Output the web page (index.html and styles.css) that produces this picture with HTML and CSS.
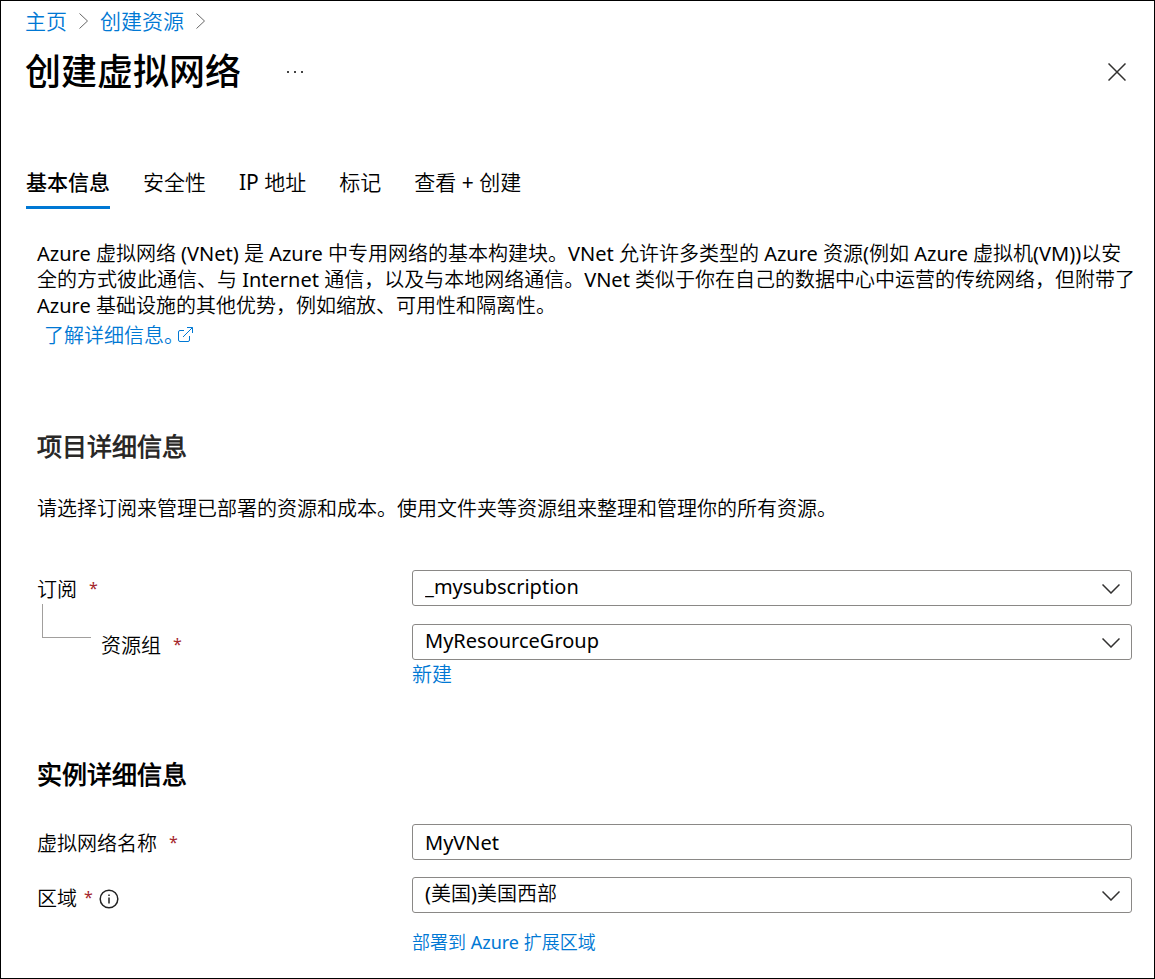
FILE: index.html
```html
<!DOCTYPE html>
<html lang="zh-CN">
<head>
<meta charset="utf-8">
<meta name="viewport" content="width=device-width, initial-scale=1">
<title>创建虚拟网络</title>
<link rel="stylesheet" href="styles.css">
</head>
<body>
<div class="page">
  <nav class="breadcrumb" aria-label="导航路径">
    <a class="link" href="#">主页</a>
    <svg class="crumb-arrow" viewBox="0 0 9 16" aria-hidden="true"><path d="M.5.5L8.500 8l-8 7.500"/></svg>
    <a class="link" href="#">创建资源</a>
    <svg class="crumb-arrow" viewBox="0 0 9 16" aria-hidden="true"><path d="M.5.5L8.500 8l-8 7.500"/></svg>
  </nav>

  <header class="header">
    <h1 class="title">创建虚拟网络</h1>
    <button class="icon-button more" type="button" aria-label="更多">
      <svg class="more-icon" viewBox="0 0 17 4" aria-hidden="true"><path d="M0 1h2v2h-2zM7 1h2v2h-2zM14 1h2v2h-2z"/></svg>
    </button>
    <button class="icon-button close" type="button" aria-label="关闭">
      <svg class="close-icon" viewBox="0 0 18 18" aria-hidden="true"><path d="M.5.5l17 17M17.500.5l-17 17"/></svg>
    </button>
  </header>

  <div class="tabs" role="tablist">
    <button class="tab tab-active" type="button" role="tab" aria-selected="true">基本信息</button>
    <button class="tab" type="button" role="tab" aria-selected="false">安全性</button>
    <button class="tab" type="button" role="tab" aria-selected="false">IP 地址</button>
    <button class="tab" type="button" role="tab" aria-selected="false">标记</button>
    <button class="tab" type="button" role="tab" aria-selected="false">查看 + 创建</button>
  </div>

  <main class="content">
    <p class="intro">Azure 虚拟网络 (VNet) 是 Azure 中专用网络的基本构建块。VNet 允许许多类型的 Azure 资源(例如 Azure 虚拟机(VM))以安<br>全的方式彼此通信、与 Internet 通信，以及与本地网络通信。VNet 类似于你在自己的数据中心中运营的传统网络，但附带了<br>Azure 基础设施的其他优势，例如缩放、可用性和隔离性。</p>
    <a class="link learn-more" href="#">了解详细信息。<svg class="external-icon" viewBox="0 0 16 16" aria-hidden="true"><path d="M7 3.500H3Q1.500 3.500 1.500 5V13Q1.500 14.500 3 14.500H11Q12.500 14.500 12.500 13V9M10 .5h5.500V6M15.500.5L6 10"/></svg></a>

    <h2 class="section-title section-title-soft">项目详细信息</h2>
    <p class="section-text">请选择订阅来管理已部署的资源和成本。使用文件夹等资源组来整理和管理你的所有资源。</p>

    <div class="form">
      <div class="field">
        <label class="label" for="subscription">订阅<span class="required required-wide">*</span></label>
        <div class="select-box">
          <select class="control" id="subscription"><option>_mysubscription</option></select>
          <svg class="chevron" viewBox="0 0 18 10" aria-hidden="true"><path d="M.5.5L9 9 17.500.5"/></svg>
        </div>
      </div>
      <div class="field">
        <div class="nested">
          <span class="branch"></span>
          <label class="label" for="group">资源组<span class="required required-wide">*</span></label>
        </div>
        <div class="select-box">
          <select class="control" id="group"><option>MyResourceGroup</option></select>
          <svg class="chevron" viewBox="0 0 18 10" aria-hidden="true"><path d="M.5.5L9 9 17.500.5"/></svg>
        </div>
        <a class="link new-link" href="#">新建</a>
      </div>
    </div>

    <h2 class="section-title section-title-instance">实例详细信息</h2>

    <div class="form form-instance">
      <div class="field">
        <label class="label" for="name">虚拟网络名称<span class="required required-wide">*</span></label>
        <input class="control" id="name" type="text" value="MyVNet">
      </div>
      <div class="field">
        <div class="label-row">
          <label class="label" for="region">区域<span class="required">*</span></label>
          <svg class="info-icon" viewBox="0 0 20 20" role="img" aria-label="信息"><circle cx="10" cy="10" r="8.800"/><path d="M10 8.500V14.500M10 5.500V7"/></svg>
        </div>
        <div class="select-box">
          <select class="control" id="region"><option>(美国)美国西部</option></select>
          <svg class="chevron" viewBox="0 0 18 10" aria-hidden="true"><path d="M.5.5L9 9 17.500.5"/></svg>
        </div>
        <a class="link zone-link" href="#">部署到 Azure 扩展区域</a>
      </div>
    </div>
  </main>
</div>
</body>
</html>
```

FILE: styles.css
```css
* {
  box-sizing: border-box;
}

body {
  margin: 0;
  background: #fff;
  color: #000;
  font-family: "Noto Sans", "Noto Sans CJK SC DemiLight", "Noto Sans CJK SC", sans-serif;
  font-size: 20px;
  line-height: 26px;
}

h1, h2, p {
  margin: 0;
}

button, input, select {
  font: inherit;
  color: inherit;
}

svg {
  display: block;
  flex: none;
  fill: none;
  stroke: #323130;
}

.page {
  min-height: 100vh;
  border: 1px solid #000;
  padding: 7px 22px 20px 24px;
}

.link {
  color: #0078d4;
  text-decoration: none;
}

.breadcrumb {
  display: flex;
  align-items: center;
  gap: 12px;
  font-size: 21px;
}

.crumb-arrow {
  width: 9px;
  height: 16px;
  stroke: #666;
}

.header {
  display: flex;
  align-items: center;
  margin-top: 14px;
}

.title {
  font-family: "Noto Sans", "Noto Sans CJK SC Medium", "Noto Sans CJK SC", sans-serif;
  font-size: 36px;
  line-height: 48px;
  font-weight: 500;
}

.icon-button {
  display: flex;
  padding: 4px;
  border: 0;
  background: none;
}

.more {
  margin-left: 42px;
}

.more-icon {
  width: 17px;
  height: 4px;
  fill: #444;
  stroke: none;
}

.close {
  margin: 0 2px 0 auto;
}

.close-icon {
  width: 18px;
  height: 18px;
  stroke-width: 1.5;
}

.tabs {
  display: flex;
  gap: 33px;
  margin-top: 72px;
  padding-left: 1px;
}

.tab {
  padding: 0 0 10px;
  border: 0;
  border-bottom: 3px solid transparent;
  background: none;
  font-size: 21px;
  line-height: 28px;
}

.tab-active {
  border-bottom-color: #0078d4;
  font-family: "Noto Sans", "Noto Sans CJK SC Medium", "Noto Sans CJK SC", sans-serif;
  font-weight: 500;
}

.content {
  padding: 32px 0 0 12px;
}

.intro {
  white-space: nowrap;
}

.learn-more {
  display: inline-flex;
  align-items: center;
  margin: 4px 0 0 7px;
}

.external-icon {
  width: 16px;
  height: 16px;
  margin: -2px 0 0 -7px;
  stroke: #0078d4;
}

.section-title {
  font-size: 25px;
  line-height: 34px;
  font-weight: 600;
}

.section-title-soft {
  margin-top: 80px;
  color: #292827;
}

.section-title-instance {
  margin-top: 69px;
}

.section-text {
  margin-top: 33px;
}

.form {
  display: grid;
  gap: 18px;
  margin-top: 48px;
}

.form-instance {
  gap: 17px;
  margin-top: 33px;
}

.field {
  display: grid;
  grid-template-columns: 375px minmax(0, 1fr);
}

.label,
.label-row {
  display: flex;
  align-items: center;
  height: 36px;
}

.field > .label {
  padding-top: 4px;
}

.label-row {
  padding-top: 8px;
}

.required {
  margin-left: 7px;
  padding-bottom: 4px;
  color: #a4262c;
  font-size: 16px;
}

.required-wide {
  margin-left: 12px;
}

.nested {
  display: flex;
  gap: 10px;
  height: 36px;
  padding: 4px 0 0 5px;
}

.branch {
  width: 49px;
  height: 34px;
  margin-top: -24px;
  border: solid #a19f9d;
  border-width: 0 0 1px 1px;
}

.info-icon {
  width: 20px;
  height: 20px;
  margin-left: 6px;
  stroke: #222;
  stroke-width: 1.500;
}

.select-box {
  position: relative;
}

.control {
  display: block;
  width: 100%;
  height: 36px;
  padding: 0 12px;
  border: 1px solid #8a8886;
  border-radius: 3px;
  background: #fff;
  appearance: none;
}

select.control {
  padding-bottom: 3px;
}

.chevron {
  position: absolute;
  top: 14px;
  right: 12px;
  width: 18px;
  height: 10px;
  stroke-width: 1.500;
  pointer-events: none;
}

.new-link,
.zone-link {
  grid-column: 2;
  justify-self: start;
}

.new-link {
  margin-top: 2px;
}

.zone-link {
  margin-top: 16px;
  font-size: 18px;
}
```
